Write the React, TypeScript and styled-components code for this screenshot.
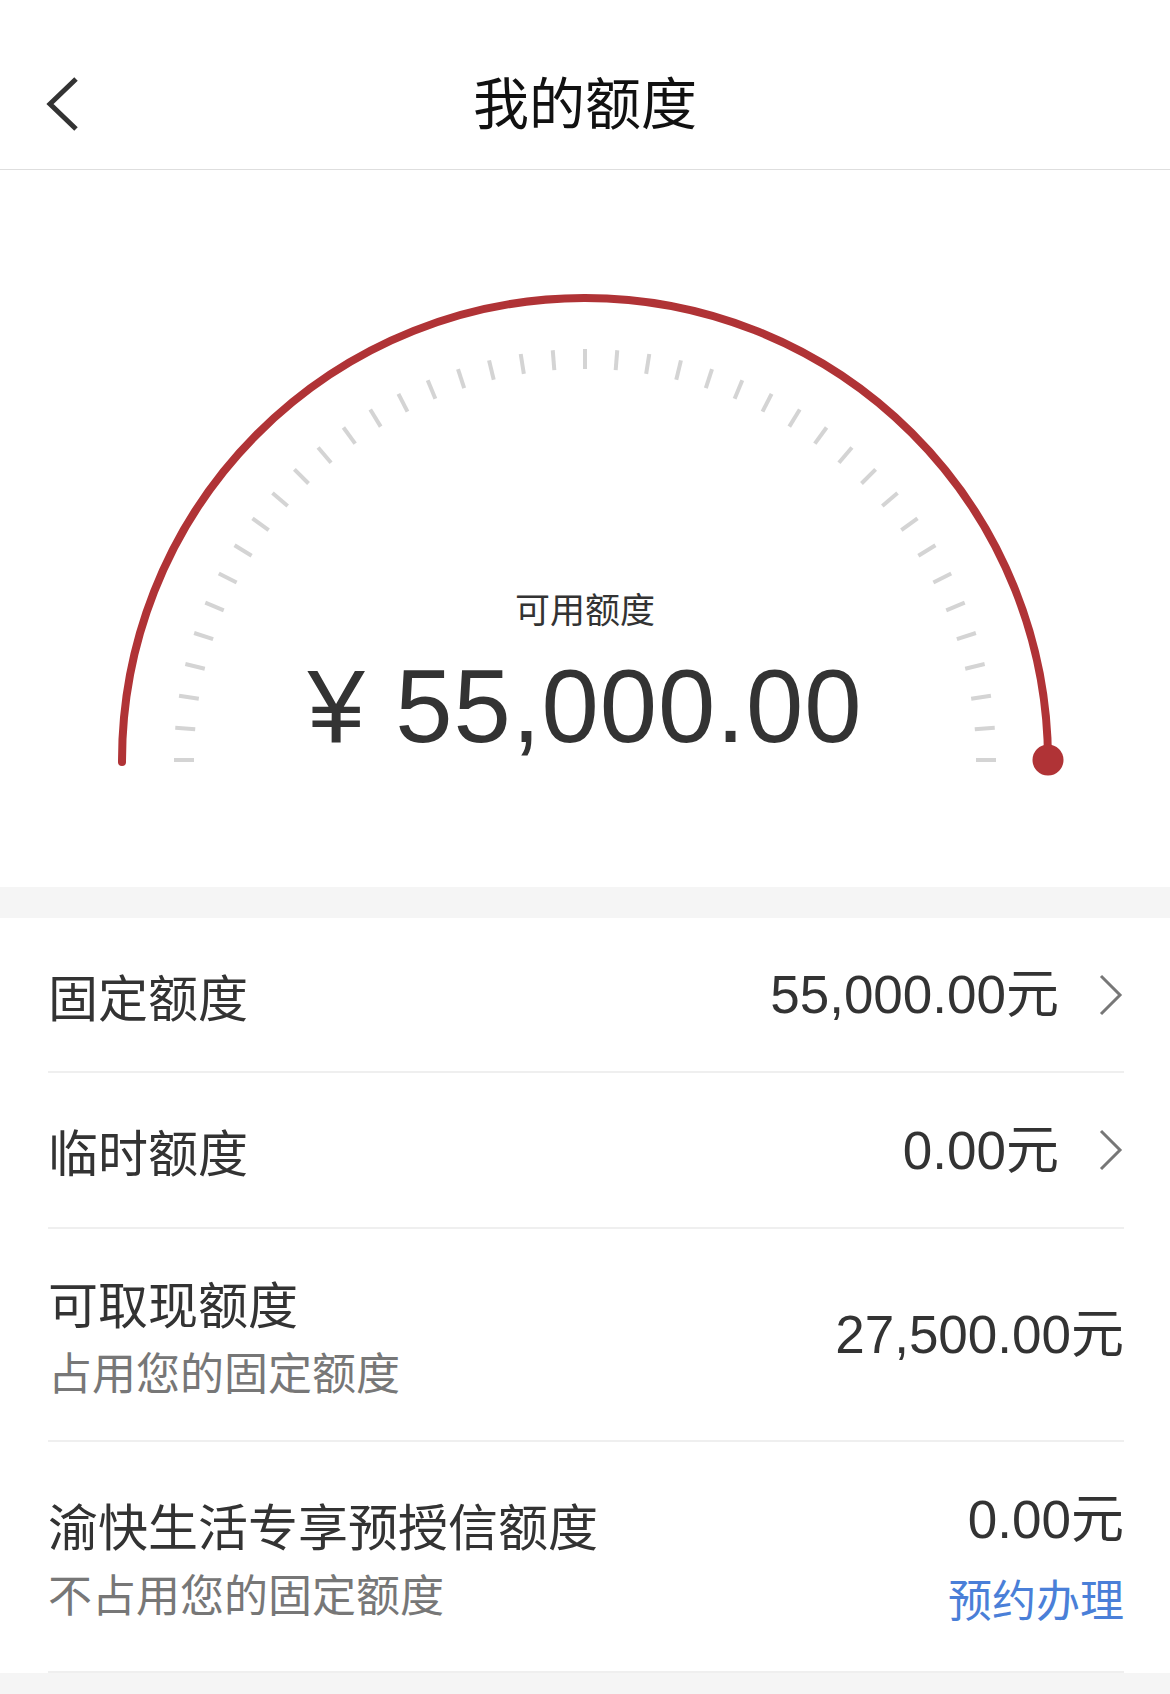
import React from "react";
import styled, { createGlobalStyle } from "styled-components";

const GlobalStyle = createGlobalStyle`
  html, body {
    margin: 0;
    padding: 0;
    background: #ffffff;
  }
  body {
    font-family: "Liberation Sans", "Noto Sans CJK SC", sans-serif;
    color: #333333;
  }
`;

const Page = styled.div`
  width: 1170px;
  min-height: 1694px;
  background: #f5f5f5;
`;

const Header = styled.header`
  height: 170px;
  background: #ffffff;
  border-bottom: 1px solid #dedede;
  display: flex;
  align-items: center;
  position: relative;
  padding-top: 30px;
  box-sizing: border-box;
`;

const BackBtn = styled.button`
  position: absolute;
  left: 40px;
  top: 76px;
  width: 44px;
  height: 56px;
  border: none;
  background: none;
  padding: 0;
  cursor: pointer;
`;

const Title = styled.h1`
  flex: 1;
  margin: 0;
  text-align: center;
  font-size: 56px;
  font-weight: 400;
  color: #111111;
  font-family: "Noto Sans CJK SC", sans-serif;
  line-height: 1;
`;

const GaugeSection = styled.section`
  position: relative;
  height: 717px;
  background: #ffffff;
  margin-bottom: 31px;
  display: flex;
  flex-direction: column;
  align-items: center;
  padding-top: 420px;
  box-sizing: border-box;
`;

const GaugeSvg = styled.svg`
  position: absolute;
  left: 0;
  top: 0;
`;

const GaugeLabel = styled.div`
  position: relative;
  font-family: "Noto Sans CJK SC", sans-serif;
  font-size: 35px;
  line-height: 1;
  color: #333333;
`;

const GaugeAmount = styled.div`
  position: relative;
  margin-top: 30px;
  font-family: "Liberation Sans", sans-serif;
  font-size: 103px;
  line-height: 1;
  color: #333333;
  letter-spacing: 1px;
`;

const List = styled.div`
  background: #ffffff;
  padding: 0 46px 0 48px;
`;

const Row = styled.div<{ $h: number }>`
  height: ${(p) => p.$h}px;
  display: flex;
  align-items: center;
  justify-content: space-between;
  border-bottom: 2px solid #efefef;
  box-sizing: border-box;
`;

const Left = styled.div`
  display: flex;
  flex-direction: column;
  gap: 22px;
`;

const Label = styled.div`
  font-family: "Noto Sans CJK SC", sans-serif;
  font-size: 50px;
  line-height: 1;
  color: #333333;
`;

const Sub = styled.div`
  font-family: "Noto Sans CJK SC", sans-serif;
  font-size: 44px;
  line-height: 1;
  color: #777777;
`;

const Right = styled.div`
  display: flex;
  flex-direction: column;
  align-items: flex-end;
  gap: 30px;
`;

const ValueLine = styled.div`
  display: flex;
  align-items: center;
  gap: 39px;
`;

const Value = styled.span`
  font-size: 53px;
  line-height: 1;
  color: #333333;
  font-family: "Liberation Sans", "Noto Sans CJK SC", sans-serif;
`;

const Link = styled.a`
  font-family: "Noto Sans CJK SC", sans-serif;
  font-size: 44px;
  line-height: 1;
  color: #4a7fd8;
  text-decoration: none;
`;

const Footer = styled.div`
  height: 20px;
  background: #f5f5f5;
`;

const Chevron = () => (
  <svg width="26" height="44" viewBox="0 0 26 44">
    <path d="M3 3 L22 22 L3 41" fill="none" stroke="#777" strokeWidth="3" />
  </svg>
);

const Gauge = () => {
  const cx = 585;
  const cy = 590;
  const r = 463;
  const ticks = Array.from({ length: 41 }, (_, i) => {
    const a = Math.PI - (i * Math.PI) / 40;
    const c = Math.cos(a);
    const s = Math.sin(a);
    return (
      <line
        key={i}
        x1={cx + c * 391}
        y1={cy - s * 391}
        x2={cx + c * 411}
        y2={cy - s * 411}
        stroke="#d4d4d4"
        strokeWidth="4"
      />
    );
  });
  return (
    <GaugeSvg width="1170" height="717" viewBox="0 0 1170 717">
      {ticks}
      <path
        d={`M ${cx - r} ${cy + 2} A ${r} ${r} 0 0 1 ${cx + r} ${cy}`}
        fill="none"
        stroke="#b03336"
        strokeWidth="8"
        strokeLinecap="round"
      />
      <circle cx={cx + r} cy={cy} r="15.5" fill="#b03336" />
    </GaugeSvg>
  );
};

export default function App() {
  return (
    <Page>
      <GlobalStyle />
      <Header>
        <BackBtn aria-label="back">
          <svg width="44" height="56" viewBox="0 0 44 56">
            <path d="M36 3 L10 28 L36 53" fill="none" stroke="#333" strokeWidth="5" />
          </svg>
        </BackBtn>
        <Title>我的额度</Title>
      </Header>

      <GaugeSection>
        <Gauge />
        <GaugeLabel>可用额度</GaugeLabel>
        <GaugeAmount>¥ 55,000.00</GaugeAmount>
      </GaugeSection>

      <List>
        <Row $h={155}>
          <Label>固定额度</Label>
          <ValueLine>
            <Value>55,000.00元</Value>
            <Chevron />
          </ValueLine>
        </Row>
        <Row $h={156}>
          <Label>临时额度</Label>
          <ValueLine>
            <Value>0.00元</Value>
            <Chevron />
          </ValueLine>
        </Row>
        <Row $h={213}>
          <Left>
            <Label>可取现额度</Label>
            <Sub>占用您的固定额度</Sub>
          </Left>
          <Value>27,500.00元</Value>
        </Row>
        <Row $h={231}>
          <Left>
            <Label>渝快生活专享预授信额度</Label>
            <Sub>不占用您的固定额度</Sub>
          </Left>
          <Right>
            <Value>0.00元</Value>
            <Link href="#">预约办理</Link>
          </Right>
        </Row>
      </List>
      <Footer />
    </Page>
  );
}
